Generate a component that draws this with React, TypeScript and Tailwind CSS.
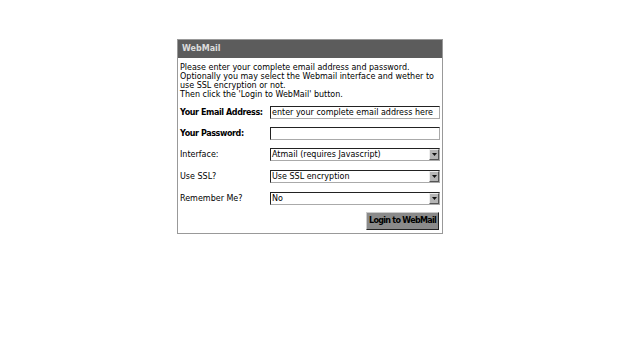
import React from "react";

function SelectBox({ value }: { value: string }) {
  return (
    <div className="flex h-[13px] w-[170px] border border-t-[#222] border-l-[#222] border-r-[#aaa] border-b-[#aaa] bg-white">
      <div className="flex-1 overflow-hidden whitespace-nowrap pl-[1px] leading-[11px] text-black">{value}</div>
      <div className="flex w-[10px] items-center justify-center border border-t-[#eee] border-l-[#eee] border-r-[#555] border-b-[#555] bg-[#b5b5b5]">
        <svg width="5" height="3" viewBox="0 0 5 3">
          <path d="M0 0 L5 0 L2.5 3 Z" fill="#111" />
        </svg>
      </div>
    </div>
  );
}

function TextBox({ value }: { value?: string }) {
  return (
    <div className="h-[13px] w-[170px] overflow-hidden whitespace-nowrap border border-t-[#222] border-l-[#222] border-r-[#aaa] border-b-[#aaa] bg-white pl-[1px] leading-[11px] text-black">
      {value}
    </div>
  );
}

export default function App() {
  const rows = [
    { label: "Your Email Address:", bold: true, gap: "mt-0", field: <TextBox value="enter your complete email address here" /> },
    { label: "Your Password:", bold: true, gap: "mt-[8px]", field: <TextBox /> },
    { label: "Interface:", bold: false, gap: "mt-[8px]", field: <SelectBox value="Atmail (requires Javascript)" /> },
    { label: "Use SSL?", bold: false, gap: "mt-[9px]", field: <SelectBox value="Use SSL encryption" /> },
    { label: "Remember Me?", bold: false, gap: "mt-[9px]", field: <SelectBox value="No" /> },
  ];

  return (
    <div className="min-h-[343px] bg-white pt-[39px] text-[8px] text-black" style={{ fontFamily: '"DejaVu Sans", Verdana, sans-serif' }}>
      <div className="mx-auto w-[266px] border border-[#999] bg-white">
        <div className="flex h-[18px] items-center bg-[#5c5c5c] pl-[4px] text-[8px] font-bold text-[#dcdcdc]">WebMail</div>
        <div className="px-[2px] pt-[5px] leading-[9px]">
          <p>Please enter your complete email address and password.</p>
          <p>Optionally you may select the Webmail interface and wether to use SSL encryption or not.</p>
          <p>Then click the 'Login to WebMail' button.</p>
        </div>
        <div className="flex flex-col px-[2px] pt-[7px]">
          {rows.map((r) => (
            <div key={r.label} className={"flex items-center " + r.gap}>
              <div className={"w-[90px] whitespace-nowrap " + (r.bold ? "font-bold tracking-[-0.4px]" : "")}>{r.label}</div>
              {r.field}
            </div>
          ))}
        </div>
        <div className="flex justify-end px-[3px] pt-[7px] pb-[3px]">
          <button className="h-[18px] whitespace-nowrap border border-t-[#ccc] border-l-[#ccc] border-r-[#222] border-b-[#222] bg-[#8a8a8a] px-[2px] text-[8px] font-bold tracking-[-0.7px] text-black">
            Login to WebMail
          </button>
        </div>
      </div>
    </div>
  );
}
